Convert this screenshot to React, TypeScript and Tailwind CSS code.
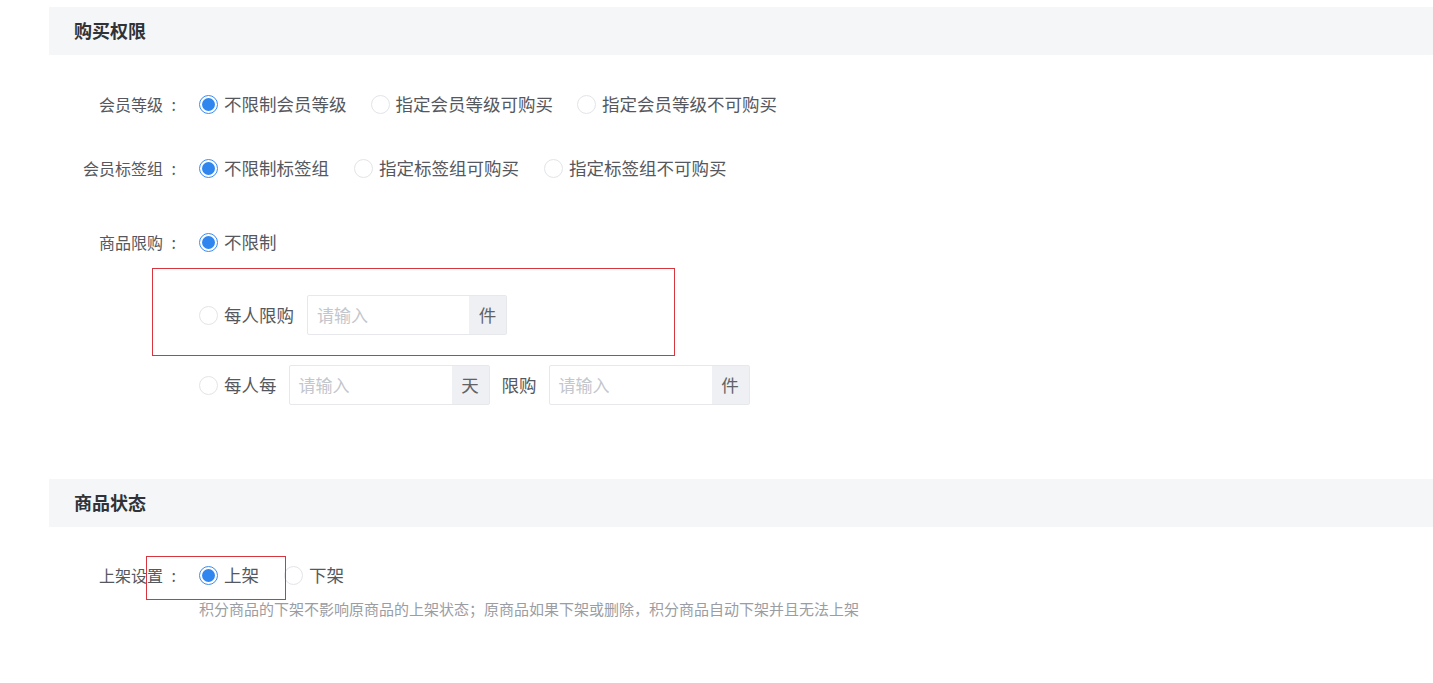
import * as React from 'react';

const font = { fontFamily: '"Microsoft YaHei", "Noto Sans CJK SC", "Noto Sans", sans-serif' };

interface RadioProps {
  checked?: boolean;
  label?: string;
}

const Radio = ({ checked, label }: RadioProps) => (
  <span className="flex items-center shrink-0">
    {checked ? (
      <span className="flex h-[19px] w-[19px] items-center justify-center rounded-full border border-[#3b8cef] bg-white">
        <span className="h-[13px] w-[13px] rounded-full bg-[#2f86ee]" />
      </span>
    ) : (
      <span className="h-[19px] w-[19px] rounded-full border border-[#e2e4e8] bg-white" />
    )}
    {label && <span className="ml-[6px] text-[17.5px] text-[#55585e]">{label}</span>}
  </span>
);

const SectionHeader = ({ title }: { title: string }) => (
  <div className="flex h-[48px] items-center bg-[#f5f6f8] pl-[25px] text-[18px] font-bold leading-[24px] text-[#2f3337]">
    <span className="-mt-[3px]">{title}</span>
  </div>
);

const FormRow = ({ label, children, className = '' }: { label?: string; children: React.ReactNode; className?: string }) => (
  <div className={`flex h-[40px] items-center ${className}`}>
    <div className="flex w-[129px] shrink-0 justify-end text-[16px] text-[#55585e]">
      {label && (
        <>
          <span>{label}</span>
          <span className="inline-block w-[15px] pr-[2px] text-right">:</span>
        </>
      )}
    </div>
    <div className="ml-[21px] flex items-center">{children}</div>
  </div>
);

const AppendInput = ({ width, unit }: { width: number; unit: string }) => (
  <div className="flex h-[40px] items-stretch rounded-[2px] border border-[#e6e8ec]">
    <div
      className="flex items-center pl-[9px] text-[17px] text-[#c3c6cc]"
      style={{ width }}
    >
      请输入
    </div>
    <div className="flex w-[37px] items-center justify-center bg-[#eef0f3] text-[17.5px] text-[#606266]">
      {unit}
    </div>
  </div>
);

export default function App() {
  return (
    <div className="min-h-screen bg-white" style={font}>
      <div className="relative pl-[49px] pt-[7px]">
        <SectionHeader title="购买权限" />

        <FormRow label="会员等级" className="mt-[29px]">
          <div className="flex items-center gap-[24px]">
            <Radio checked label="不限制会员等级" />
            <Radio label="指定会员等级可购买" />
            <Radio label="指定会员等级不可购买" />
          </div>
        </FormRow>

        <FormRow label="会员标签组" className="mt-[24px]">
          <div className="flex items-center gap-[25px]">
            <Radio checked label="不限制标签组" />
            <Radio label="指定标签组可购买" />
            <Radio label="指定标签组不可购买" />
          </div>
        </FormRow>

        <FormRow label="商品限购" className="mt-[34px]">
          <Radio checked label="不限制" />
        </FormRow>

        <FormRow className="mt-[33px]">
          <Radio label="每人限购" />
          <div className="ml-[13px]">
            <AppendInput width={161} unit="件" />
          </div>
        </FormRow>

        <FormRow className="mt-[30px]">
          <Radio label="每人每" />
          <div className="ml-[12px]">
            <AppendInput width={162} unit="天" />
          </div>
          <span className="ml-[12px] mr-[12px] text-[17.5px] text-[#55585e]">限购</span>
          <AppendInput width={162} unit="件" />
        </FormRow>

        <div className="mt-[74px]">
          <SectionHeader title="商品状态" />
        </div>

        <FormRow label="上架设置" className="mt-[28px]">
          <div className="flex items-center gap-[25px]">
            <Radio checked label="上架" />
            <Radio label="下架" />
          </div>
        </FormRow>
        <div className="ml-[150px] mt-[4px] text-[15px] leading-[20px] text-[#9a9da3]">
          积分商品的下架不影响原商品的上架状态；原商品如果下架或删除，积分商品自动下架并且无法上架
        </div>

        {/* annotation boxes */}
        <div className="pointer-events-none absolute left-[152px] top-[268px] h-[88px] w-[523px] border border-[#d8363e]" />
        <div className="pointer-events-none absolute left-[146px] top-[556px] h-[44px] w-[140px] border border-[#d8363e]" />
      </div>
    </div>
  );
}
